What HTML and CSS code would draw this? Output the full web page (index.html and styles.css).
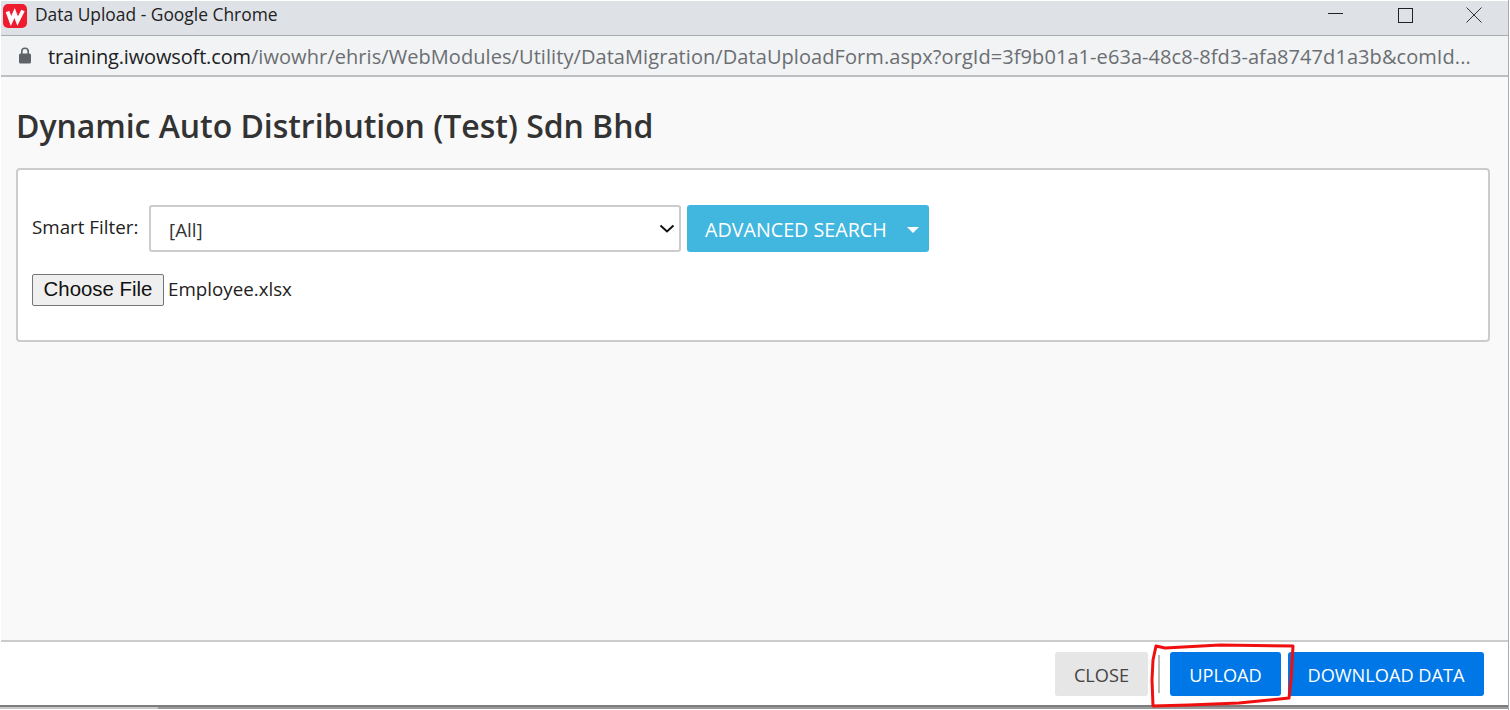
FILE: index.html
```html
<!DOCTYPE html>
<html lang="en">
<head>
<meta charset="utf-8">
<title>Data Upload - Google Chrome</title>
<link rel="stylesheet" href="styles.css">
</head>
<body>
<div class="window">
  <header class="titlebar">
    <svg class="logo" viewBox="0 0 24 24" aria-hidden="true">
      <rect width="24" height="24" rx="5" fill="#ee1c2e"/>
      <path d="M4.500 7.500 8 17l3.600-8 3 8L20 6.500" fill="none" stroke="#fff" stroke-width="3.800" stroke-linejoin="miter"/>
    </svg>
    <span class="title">Data Upload - Google Chrome</span>
    <div class="controls">
      <svg class="ctl" viewBox="0 0 16 16" aria-hidden="true"><path d="M0 6.500h15" stroke="#222" fill="none"/></svg>
      <svg class="ctl" viewBox="0 0 16 16" aria-hidden="true"><rect x="1.500" y="1.500" width="14" height="14" stroke="#222" fill="none"/></svg>
      <svg class="ctl" viewBox="0 0 16 16" aria-hidden="true"><path d="M.5.5l15 15M15.500.5l-15 15" stroke="#333" fill="none"/></svg>
    </div>
  </header>
  <div class="urlbar">
    <svg class="lock" viewBox="0 0 14 17" aria-hidden="true">
      <rect x="1" y="6.500" width="12" height="10" rx="1.500" fill="#5f6368"/>
      <path d="M3.800 7V4.500a3.200 3.200 0 0 1 6.400 0V7" fill="none" stroke="#5f6368" stroke-width="1.600"/>
    </svg>
    <div class="url"><span class="host">training.iwowsoft.com</span>/iwowhr/ehris/WebModules/Utility/DataMigration/DataUploadForm.aspx?orgId=3f9b01a1-e63a-48c8-8fd3-afa8747d1a3b&amp;comId...</div>
  </div>
  <main class="content">
    <h1 class="heading">Dynamic Auto Distribution (Test) Sdn Bhd</h1>
    <section class="panel">
      <div class="filter-row">
        <label class="filter-label" for="smart">Smart Filter:</label>
        <select class="filter-select" id="smart"><option>[All]</option></select>
        <button class="btn btn-info" type="button">ADVANCED SEARCH<span class="caret"></span></button>
      </div>
      <div class="file-row">
        <button class="file-btn" type="button">Choose File</button>
        <span class="file-name">Employee.xlsx</span>
      </div>
    </section>
  </main>
  <footer class="footer">
    <button class="btn btn-close" type="button">CLOSE</button>
    <span class="sep"></span>
    <button class="btn btn-primary btn-upload" type="button">UPLOAD</button>
    <button class="btn btn-primary" type="button">DOWNLOAD DATA</button>
  </footer>
  <div class="strip">
    <span class="strip-left"></span>
    <span class="strip-right"></span>
  </div>
</div>
<svg class="scribble" viewBox="0 0 1510 710" aria-hidden="true">
  <path d="M1156 646l9 2 55-3 73 1-2 34-2 18-50 5-50 2-36 1-1-26 1-20 3-14z" fill="none" stroke="#f00f0f" stroke-width="3" stroke-linejoin="round"/>
</svg>
</body>
</html>
```
FILE: styles.css
```css
* { box-sizing: border-box; }
html, body { margin: 0; height: 710px; overflow: hidden; background: #fff; }
body { font-family: "Open Sans", "Noto Sans", sans-serif; color: #333; }

.window { display: flex; flex-direction: column; height: 710px; padding: 1px 0 1px 1px; border-right: 1px solid #a9abae; margin-right: 1px; }

.titlebar { display: flex; align-items: center; height: 35px; background: #dee1e6; border-bottom: 1px solid #a9abae; padding-left: 2px; flex: none; }
.logo { width: 24px; height: 24px; flex: none; margin-top: -5px; }
.title { margin-left: 8px; font-size: 17.400px; color: #222; margin-top: -9px; }
.controls { margin-left: auto; display: flex; align-items: center; gap: 53px; padding-right: 26px; margin-top: -7px; }
.ctl { width: 16px; height: 16px; display: block; }

.urlbar { display: flex; align-items: center; height: 41px; background: #f1f3f4; border-bottom: 2px solid #bfc0c2; padding-left: 17px; flex: none; }
.lock { width: 14px; height: 17px; flex: none; }
.url { margin-left: 16px; margin-top: 2px; font-size: 20px; color: #6b6e72; white-space: nowrap; letter-spacing: .07px; }
.host { color: #202124; letter-spacing: -.15px; }

.content { flex: 1; background: #f9f9f9; padding: 24px 18px 0 15px; }
.heading { margin: 0; font-size: 32px; line-height: 50px; font-weight: 600; color: #333; letter-spacing: -.05px; }

.panel { margin-top: 17px; height: 174px; background: #fff; border: 2px solid #ccc; border-radius: 4px; padding: 35px 14px 0; }
.filter-row { display: flex; align-items: flex-start; }
.filter-label { font-size: 18.800px; line-height: 26px; color: #222; width: 117px; flex: none; margin-top: 9px; }
.filter-select { appearance: none; width: 532px; height: 47px; border: 2px solid #ccc; border-radius: 3px; padding: 2px 0 0 18px; font: 18.800px "Open Sans", sans-serif; color: #333; background: #fff url("data:image/svg+xml,%3Csvg xmlns='http://www.w3.org/2000/svg' width='16' height='9'%3E%3Cpath d='M1.500 1.500 8 7.500l6.500-6' fill='none' stroke='%23111' stroke-width='2'/%3E%3C/svg%3E") no-repeat right 4px center; }

.btn { border: 0; border-radius: 3px; color: #fff; font: 18.200px "Open Sans", sans-serif; cursor: pointer; display: flex; align-items: center; justify-content: center; padding: 2px 0 0; }
.btn-info { margin-left: 6px; width: 242px; height: 47px; background: #41b6de; justify-content: flex-start; padding-left: 18px; font-size: 19.700px; }
.caret { margin-left: 20px; margin-top: 1px; width: 0; height: 0; border-left: 6px solid transparent; border-right: 6px solid transparent; border-top: 6px solid #fff; }

.file-row { display: flex; align-items: center; margin-top: 22px; }
.file-btn { width: 132px; height: 32px; background: #efefef; border: 1px solid #767676; border-radius: 2px; font: 20.400px "Liberation Sans", Arial, sans-serif; color: #111; padding: 0 0 2px; }
.file-name { margin-left: 4px; margin-top: -4px; font-size: 18.750px; color: #222; }

.footer { display: flex; align-items: center; height: 65px; flex: none; background: #fff; border-top: 2px solid #ccc; padding: 0 24px 0 0; justify-content: flex-end; }
.footer .btn { height: 44px; }
.btn-close { width: 93px; background: #e6e6e6; color: #444; }
.sep { width: 2px; height: 38px; background: #b9b9b9; margin: 0 10px 0 10px; }
.btn-primary { background: #0077e6; width: 196px; }
.btn-upload { width: 111px; margin-right: 7px; }

.strip { display: flex; height: 4px; flex: none; background: #8a8a8a; border-top: 2px solid #7d7d7d; margin-left: -1px; }
.strip-left { width: 158px; background: #c9c9c9; }
.strip-right { flex: 1; background: #9a9a9a; }

.scribble { position: absolute; left: 0; top: 0; width: 1510px; height: 710px; pointer-events: none; }
```
